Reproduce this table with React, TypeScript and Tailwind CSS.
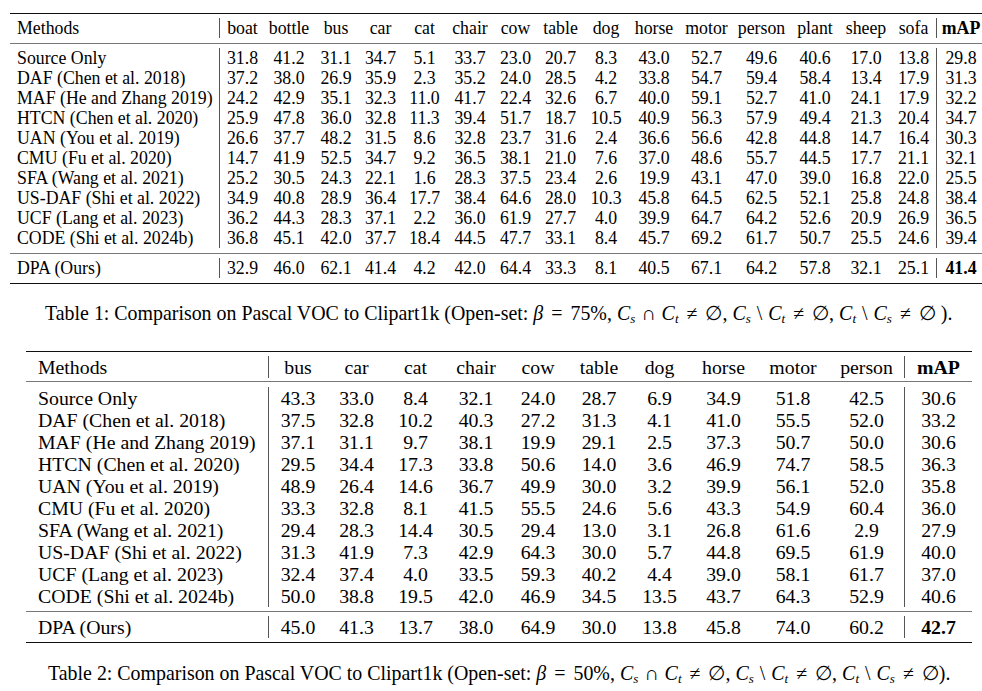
import React from "react";

type Row = { name: string; vals: string[] };

const t1Head = ["boat", "bottle", "bus", "car", "cat", "chair", "cow", "table", "dog", "horse", "motor", "person", "plant", "sheep", "sofa", "mAP"];

const t1Rows: Row[] = [
  { name: "Source Only", vals: ["31.8", "41.2", "31.1", "34.7", "5.1", "33.7", "23.0", "20.7", "8.3", "43.0", "52.7", "49.6", "40.6", "17.0", "13.8", "29.8"] },
  { name: "DAF (Chen et al. 2018)", vals: ["37.2", "38.0", "26.9", "35.9", "2.3", "35.2", "24.0", "28.5", "4.2", "33.8", "54.7", "59.4", "58.4", "13.4", "17.9", "31.3"] },
  { name: "MAF (He and Zhang 2019)", vals: ["24.2", "42.9", "35.1", "32.3", "11.0", "41.7", "22.4", "32.6", "6.7", "40.0", "59.1", "52.7", "41.0", "24.1", "17.9", "32.2"] },
  { name: "HTCN (Chen et al. 2020)", vals: ["25.9", "47.8", "36.0", "32.8", "11.3", "39.4", "51.7", "18.7", "10.5", "40.9", "56.3", "57.9", "49.4", "21.3", "20.4", "34.7"] },
  { name: "UAN (You et al. 2019)", vals: ["26.6", "37.7", "48.2", "31.5", "8.6", "32.8", "23.7", "31.6", "2.4", "36.6", "56.6", "42.8", "44.8", "14.7", "16.4", "30.3"] },
  { name: "CMU (Fu et al. 2020)", vals: ["14.7", "41.9", "52.5", "34.7", "9.2", "36.5", "38.1", "21.0", "7.6", "37.0", "48.6", "55.7", "44.5", "17.7", "21.1", "32.1"] },
  { name: "SFA (Wang et al. 2021)", vals: ["25.2", "30.5", "24.3", "22.1", "1.6", "28.3", "37.5", "23.4", "2.6", "19.9", "43.1", "47.0", "39.0", "16.8", "22.0", "25.5"] },
  { name: "US-DAF (Shi et al. 2022)", vals: ["34.9", "40.8", "28.9", "36.4", "17.7", "38.4", "64.6", "28.0", "10.3", "45.8", "64.5", "62.5", "52.1", "25.8", "24.8", "38.4"] },
  { name: "UCF (Lang et al. 2023)", vals: ["36.2", "44.3", "28.3", "37.1", "2.2", "36.0", "61.9", "27.7", "4.0", "39.9", "64.7", "64.2", "52.6", "20.9", "26.9", "36.5"] },
  { name: "CODE (Shi et al. 2024b)", vals: ["36.8", "45.1", "42.0", "37.7", "18.4", "44.5", "47.7", "33.1", "8.4", "45.7", "69.2", "61.7", "50.7", "25.5", "24.6", "39.4"] },
];
const t1Ours: Row = { name: "DPA (Ours)", vals: ["32.9", "46.0", "62.1", "41.4", "4.2", "42.0", "64.4", "33.3", "8.1", "40.5", "67.1", "64.2", "57.8", "32.1", "25.1", "41.4"] };

const t2Head = ["bus", "car", "cat", "chair", "cow", "table", "dog", "horse", "motor", "person", "mAP"];

const t2Rows: Row[] = [
  { name: "Source Only", vals: ["43.3", "33.0", "8.4", "32.1", "24.0", "28.7", "6.9", "34.9", "51.8", "42.5", "30.6"] },
  { name: "DAF (Chen et al. 2018)", vals: ["37.5", "32.8", "10.2", "40.3", "27.2", "31.3", "4.1", "41.0", "55.5", "52.0", "33.2"] },
  { name: "MAF (He and Zhang 2019)", vals: ["37.1", "31.1", "9.7", "38.1", "19.9", "29.1", "2.5", "37.3", "50.7", "50.0", "30.6"] },
  { name: "HTCN (Chen et al. 2020)", vals: ["29.5", "34.4", "17.3", "33.8", "50.6", "14.0", "3.6", "46.9", "74.7", "58.5", "36.3"] },
  { name: "UAN (You et al. 2019)", vals: ["48.9", "26.4", "14.6", "36.7", "49.9", "30.0", "3.2", "39.9", "56.1", "52.0", "35.8"] },
  { name: "CMU (Fu et al. 2020)", vals: ["33.3", "32.8", "8.1", "41.5", "55.5", "24.6", "5.6", "43.3", "54.9", "60.4", "36.0"] },
  { name: "SFA (Wang et al. 2021)", vals: ["29.4", "28.3", "14.4", "30.5", "29.4", "13.0", "3.1", "26.8", "61.6", "2.9", "27.9"] },
  { name: "US-DAF (Shi et al. 2022)", vals: ["31.3", "41.9", "7.3", "42.9", "64.3", "30.0", "5.7", "44.8", "69.5", "61.9", "40.0"] },
  { name: "UCF (Lang et al. 2023)", vals: ["32.4", "37.4", "4.0", "33.5", "59.3", "40.2", "4.4", "39.0", "58.1", "61.7", "37.0"] },
  { name: "CODE (Shi et al. 2024b)", vals: ["50.0", "38.8", "19.5", "42.0", "46.9", "34.5", "13.5", "43.7", "64.3", "52.9", "40.6"] },
];
const t2Ours: Row = { name: "DPA (Ours)", vals: ["45.0", "41.3", "13.7", "38.0", "64.9", "30.0", "13.8", "45.8", "74.0", "60.2", "42.7"] };

type Spec = {
  grid: string;
  rowH: string;
  namePad: string;
  last: number; // index of column before the second vertical line
};

const TableRow = ({ spec, name, vals, head, boldLast }: { spec: Spec; name: string; vals: string[]; head?: boolean; boldLast?: boolean }) => (
  <div className={`${spec.grid} ${spec.rowH}`}>
    <div className={`${spec.namePad} border-r border-[#555] flex items-center`}>{name}</div>
    {vals.map((v, i) => (
      <div
        key={i}
        className={`flex items-center justify-center ${i === spec.last ? "border-r border-[#555]" : ""} ${
          i === vals.length - 1 && (head || boldLast) ? "font-bold" : ""
        }`}
      >
        {v}
      </div>
    ))}
  </div>
);

// C with a subscript, as LaTeX prints $C_s$
const Cs = ({ sub }: { sub: string }) => (
  <>
    <span className="italic">C</span>
    <sub className="italic text-[13px]">{sub}</sub>
  </>
);

const Caption = ({ n, pct, pad, tail }: { n: number; pct: string; pad: string; tail: string }) => (
  <div className={`whitespace-nowrap text-[19.9px] leading-6 ${pad}`}>
    Table {n}: Comparison on Pascal VOC to Clipart1k (Open-set:{" "}
    <span className="italic">β</span>
    <span className="mx-[8px]">=</span>
    {pct}%,<span className="ml-[5px]" />
    <Cs sub="s" />
    <span className="mx-[6px]">∩</span>
    <Cs sub="t" />
    <span className="mx-[8px]">≠</span>∅,<span className="ml-[5px]" />
    <Cs sub="s" />
    <span className="mx-[6px]">\</span>
    <Cs sub="t" />
    <span className="mx-[8px]">≠</span>∅,<span className="ml-[5px]" />
    <Cs sub="t" />
    <span className="mx-[6px]">\</span>
    <Cs sub="s" />
    <span className="mx-[8px]">≠</span>∅{tail}).
  </div>
);

export default function App() {
  const s1: Spec = {
    grid: "grid grid-cols-[210px_45px_48px_46px_43px_45px_46px_45px_45px_46px_50px_55px_55px_52px_50px_46px_48px]",
    rowH: "h-[20px]",
    namePad: "pl-[7px]",
    last: 14,
  };
  const s2: Spec = {
    grid: "grid grid-cols-[243px_58px_59px_59px_62px_62px_60px_61px_67px_72px_76px_67px]",
    rowH: "h-[22px]",
    namePad: "pl-[12px]",
    last: 9,
  };

  return (
    <div className="w-[982px] h-[691px] overflow-hidden bg-white text-black" style={{ fontFamily: '"Liberation Serif", "DejaVu Serif", serif' }}>
      {/* Table 1 */}
      <div className="pt-[13px] ml-[10px] w-[975px] text-[17.8px] leading-5">
        <div className="h-px bg-[#111]" />
        <div className="pt-[4px] pb-[5px]">
          <TableRow spec={s1} name="Methods" vals={t1Head} head />
        </div>
        <div className="h-px bg-[#777]" />
        <div className="pt-[4px] pb-[5px]">
          {t1Rows.map((r) => (
            <TableRow key={r.name} spec={s1} name={r.name} vals={r.vals} />
          ))}
        </div>
        <div className="h-px bg-[#777]" />
        <div className="pt-[4px] pb-[5px]">
          <TableRow spec={s1} name={t1Ours.name} vals={t1Ours.vals} boldLast />
        </div>
        <div className="h-px bg-[#111]" />
      </div>

      <div className="mt-[17px]">
        <Caption n={1} pct="75" pad="pl-[45px]" tail=" " />
      </div>

      {/* Table 2 */}
      <div className="mt-[26px] ml-[26px] w-[946px] text-[19.8px] leading-[22px]">
        <div className="h-px bg-[#111]" />
        <div className="pt-[4px] pb-[3px]">
          <TableRow spec={s2} name="Methods" vals={t2Head} head />
        </div>
        <div className="h-px bg-[#777]" />
        <div className="pt-[5px] pb-[4px]">
          {t2Rows.map((r) => (
            <TableRow key={r.name} spec={s2} name={r.name} vals={r.vals} />
          ))}
        </div>
        <div className="h-px bg-[#777]" />
        <div className="pt-[4px] pb-[4px]">
          <TableRow spec={s2} name={t2Ours.name} vals={t2Ours.vals} boldLast />
        </div>
        <div className="h-px bg-[#111]" />
      </div>

      <div className="mt-[18px]">
        <Caption n={2} pct="50" pad="pl-[48px]" tail="" />
      </div>
    </div>
  );
}
